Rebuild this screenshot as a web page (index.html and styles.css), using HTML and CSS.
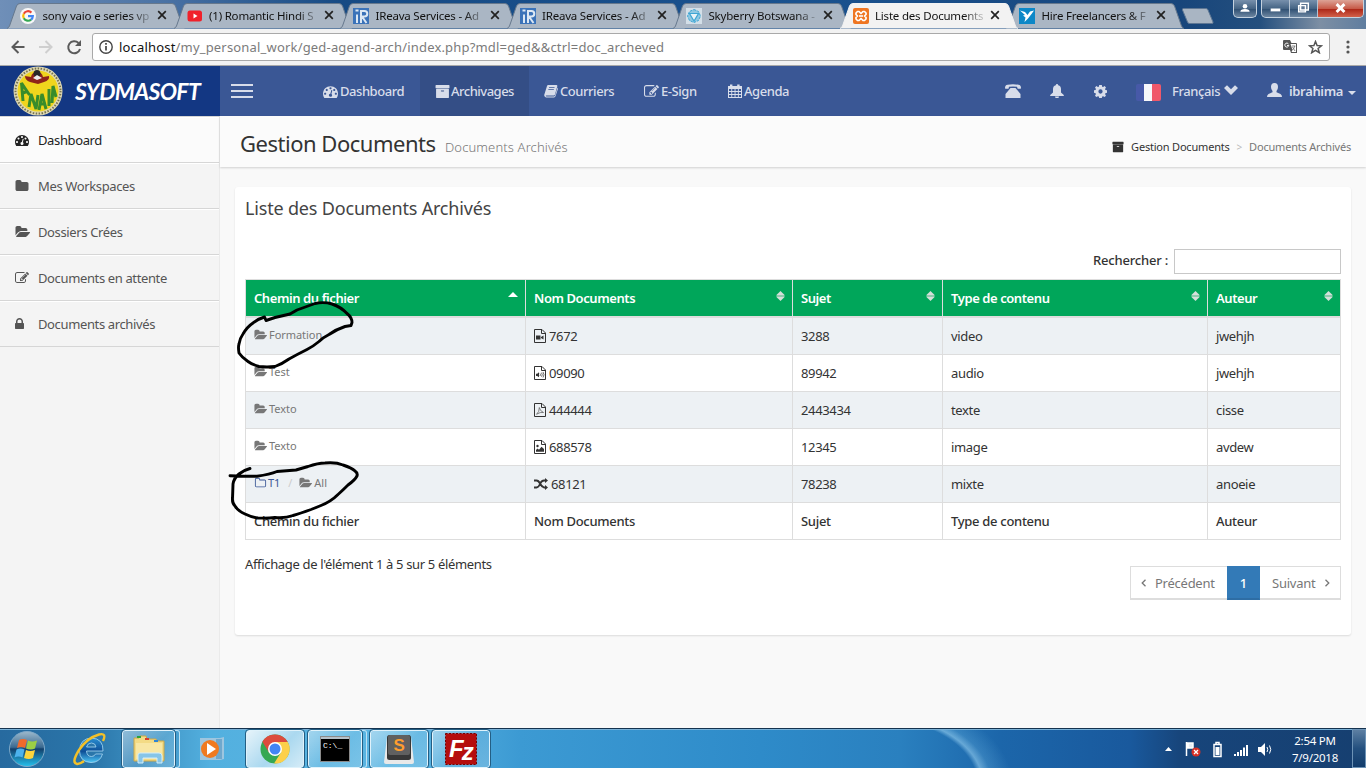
FILE: index.html
```html
<!DOCTYPE html>
<html lang="fr">
<head>
<meta charset="utf-8">
<title>Liste des Documents Archivés</title>
<link rel="stylesheet" href="styles.css">
</head>
<body>
<svg class="defs" width="0" height="0">
  <symbol id="folder" viewBox="0 0 1792 1792"><path d="M1728 608v704q0 92-66 158t-158 66h-1216q-92 0-158-66t-66-158v-960q0-92 66-158t158-66h320q92 0 158 66t66 158v32h672q92 0 158 66t66 158z"/></symbol>
  <symbol id="folder-open" viewBox="0 0 1943 1792"><path d="M1943 952q0 31-31 66l-336 396q-43 51-120.5 86.5t-143.5 35.5h-1088q-34 0-60.5-13t-26.5-43q0-31 31-66l336-396q43-51 120.5-86.5t143.5-35.5h1088q34 0 60.5 13t26.5 43zm-343-344v160h-832q-94 0-197 47.5t-164 119.5l-337 396-5 6q0-4-.5-12.5t-.5-12.5v-960q0-92 66-158t158-66h320q92 0 158 66t66 158v32h544q92 0 158 66t66 158z"/></symbol>
  <symbol id="folder-o" viewBox="0 0 1792 1792"><path d="M1600 1312v-704q0-40-28-68t-68-28h-704q-40 0-68-28t-28-68v-64q0-40-28-68t-68-28h-320q-40 0-68 28t-28 68v960q0 40 28 68t68 28h1216q40 0 68-28t28-68zm128-704v704q0 92-66 158t-158 66h-1216q-92 0-158-66t-66-158v-960q0-92 66-158t158-66h320q92 0 158 66t66 158v32h672q92 0 158 66t66 158z"/></symbol>
  <symbol id="lock" viewBox="320 0 1152 1792"><path d="M640 768h512v-192q0-106-75-181t-181-75-181 75-75 181v192zm832 96v576q0 40-28 68t-68 28h-960q-40 0-68-28t-28-68v-576q0-40 28-68t68-28h32v-192q0-184 132-316t316-132 316 132 132 316v192h32q40 0 68 28t28 68z"/></symbol>
  <symbol id="tacho" viewBox="0 0 1792 1792"><path d="M384 1152q0-53-37.5-90.5t-90.5-37.5-90.5 37.5-37.5 90.5 37.5 90.5 90.5 37.5 90.5-37.5 37.5-90.5zm192-448q0-53-37.5-90.5t-90.5-37.5-90.5 37.5-37.5 90.5 37.5 90.5 90.5 37.5 90.5-37.5 37.5-90.5zm428 481l101-382q6-26-7.5-48.5t-38.5-29.5-48 6.5-30 39.5l-101 382q-60 5-107 43.5t-63 98.5q-20 77 20 146t117 89 146-20 89-117q16-60-6-117t-72-91zm660-33q0-53-37.5-90.5t-90.5-37.5-90.5 37.5-37.5 90.5 37.5 90.5 90.5 37.5 90.5-37.5 37.5-90.5zm-640-640q0-53-37.5-90.5t-90.5-37.5-90.5 37.5-37.5 90.5 37.5 90.5 90.5 37.5 90.5-37.5 37.5-90.5zm448 192q0-53-37.5-90.5t-90.5-37.5-90.5 37.5-37.5 90.5 37.5 90.5 90.5 37.5 90.5-37.5 37.5-90.5zm320 448q0 261-141 483-19 29-54 29h-1402q-35 0-54-29-141-221-141-483 0-182 71-348t191-286 286-191 348-71 348 71 286 191 191 286 71 348z"/></symbol>
  <symbol id="edit" viewBox="0 0 1792 1792"><path d="M888 1184l116-116-152-152-116 116v56h96v96h56zm440-720q-16-16-33 1l-350 350q-17 17-1 33t33-1l350-350q17-17 1-33zm80 594v190q0 119-84.5 203.5t-203.5 84.5h-832q-119 0-203.5-84.5t-84.5-203.5v-832q0-119 84.5-203.5t203.5-84.5h832q63 0 117 25 15 7 18 23 3 17-9 29l-49 49q-14 14-32 8-23-6-45-6h-832q-66 0-113 47t-47 113v832q0 66 47 113t113 47h832q66 0 113-47t47-113v-126q0-13 9-22l64-64q15-15 35-7t20 29zm-96-738l288 288-672 672h-288v-288zm444 132l-92 92-288-288 92-92q28-28 68-28t68 28l152 152q28 28 28 68t-28 68z"/></symbol>
  <symbol id="archive" viewBox="0 0 1792 1792"><path d="M1088 832q0-26-19-45t-45-19h-256q-26 0-45 19t-19 45 19 45 45 19h256q26 0 45-19t19-45zm576-192v960q0 26-19 45t-45 19h-1408q-26 0-45-19t-19-45v-960q0-26 19-45t45-19h1408q26 0 45 19t19 45zm64-448v256q0 26-19 45t-45 19h-1536q-26 0-45-19t-19-45v-256q0-26 19-45t45-19h1536q26 0 45 19t19 45z"/></symbol>
  <symbol id="book" viewBox="0 0 14 14"><path fill-rule="evenodd" d="M4.200 1h8.300q1 .2.8 1.200L11 10.500q-.3.900-1.200.9H2.300q-.7.100-.6.600.1.400.8.400h7.600q.8 0 1-.8l2.500-8.200q.6.500.3 1.500l-2.300 7.200Q11.200 13.400 10 13.400H2Q0 13 .2 11L3 2Q3.300 1.100 4.200 1zM5.200 3.200l-.3.900h5.500l.3-.9zM4.500 5.200l-.3.900h5.500l.3-.9z"/></symbol>
  <symbol id="calendar" viewBox="0 0 14 14"><path fill-rule="evenodd" d="M0 2h2V.6h2.400V2h4.800V.6h2.400V2H14v12H0zM1 5v2h2.300V5zm3.200 0v2h2.400V5zm3.300 0v2h2.400V5zm3.300 0v2H13V5zM1 8v2h2.300V8zm3.200 0v2h2.400V8zm3.300 0v2h2.400V8zm3.300 0v2H13V8zM1 11v2h2.300v-2zm3.200 0v2h2.400v-2zm3.300 0v2h2.400v-2zm3.300 0v2H13v-2z"/></symbol>
  <symbol id="page" viewBox="0 0 12 14"><path fill="none" stroke="currentColor" d="M.5.500h7.500l3.500 3.500v9.500H.5zM7.500.5v4h4"/></symbol>
  <symbol id="tab" viewBox="0 0 178 26" preserveAspectRatio="none"><path d="M0 25.500Q1.500 25 2.500 23L9.500 3Q10.500.5 13 .5H165Q167.500.5 168.500 3L175.500 23Q176.500 25 178 25.500"/></symbol>
  <symbol id="close" viewBox="0 0 10 10"><path d="M1.200 1.200l7.600 7.600M8.800 1.200L1.200 8.800" stroke="#222" stroke-width="1.700"/></symbol>
</svg>

<div class="browser-tabs">
  <div class="tab"><svg class="tab-shape"><use href="#tab"/></svg>
    <svg class="fav" viewBox="0 0 16 16"><circle cx="8" cy="8" r="8" fill="#f8f8f8"/><g fill="none" stroke-width="2.200"><path d="M11.400 4.600A4.800 4.800 0 0 0 3.800 5.700" stroke="#ea4335"/><path d="M3.800 5.700a4.800 4.800 0 0 0 0 4.600" stroke="#fbbc05"/><path d="M3.800 10.300a4.800 4.800 0 0 0 7.300 1.300" stroke="#34a853"/><path d="M11.100 11.600A4.800 4.800 0 0 0 12.800 8.200H8" stroke="#4285f4"/></g></svg>
    <span class="tab-title">sony vaio e series vp</span><svg class="x"><use href="#close"/></svg></div>
  <div class="tab"><svg class="tab-shape"><use href="#tab"/></svg>
    <svg class="fav" viewBox="0 0 16 16"><rect x=".5" y="2.500" width="14.500" height="11" rx="2.500" fill="#f0212b"/><path d="M6.500 5.400v5l4-2.500z" fill="#fff"/></svg>
    <span class="tab-title">(1) Romantic Hindi S</span><svg class="x"><use href="#close"/></svg></div>
  <div class="tab"><svg class="tab-shape"><use href="#tab"/></svg>
    <svg class="fav" viewBox="0 0 16 16"><path fill="#3b73b9" d="M0 0h16v16H0z"/><path d="M4 6.500V15M2.500 2.500h3M8 15V3h3.500a2.500 2.500 0 0 1 0 5.500H9L13.500 15" fill="none" stroke="#dce8f4" stroke-width="2"/></svg>
    <span class="tab-title">IReava Services - Ad</span><svg class="x"><use href="#close"/></svg></div>
  <div class="tab"><svg class="tab-shape"><use href="#tab"/></svg>
    <svg class="fav" viewBox="0 0 16 16"><path fill="#3b73b9" d="M0 0h16v16H0z"/><path d="M4 6.500V15M2.500 2.500h3M8 15V3h3.500a2.500 2.500 0 0 1 0 5.500H9L13.500 15" fill="none" stroke="#dce8f4" stroke-width="2"/></svg>
    <span class="tab-title">IReava Services - Ad</span><svg class="x"><use href="#close"/></svg></div>
  <div class="tab"><svg class="tab-shape"><use href="#tab"/></svg>
    <svg class="fav" viewBox="0 0 16 16"><path fill="#d3dfe8" d="M0 0h16v16H0z"/><path d="M8 1.500l4.500 2L14.500 8l-2 4.500-4.500 2-4.500-2L1.500 8l2-4.500z" fill="#8fc8e2" stroke="#3fa6d4" stroke-dasharray="2.500 1"/><path d="M3.500 5.500h9L8 13z" fill="#e8f3f8" stroke="#3fa6d4" stroke-width="1.200"/></svg>
    <span class="tab-title">Skyberry Botswana -</span><svg class="x"><use href="#close"/></svg></div>
  <div class="tab active"><svg class="tab-shape"><use href="#tab"/></svg>
    <svg class="fav" viewBox="0 0 16 16"><rect width="16" height="16" rx="2" fill="#ef7622"/><path d="M4.500 3.500h1.500L8 5.500l2-2h1.500l1.500 1.500v1.500L11.500 8 13 9.500V11l-1.500 1.500H10l-2-2-2 2H4.500L3 11V9.500L4.500 8 3 6.500V5z" fill="none" stroke="#fff" stroke-width="1.700" stroke-linejoin="round"/><path d="M6 8h4" stroke="#fff" stroke-width="1.600"/></svg>
    <span class="tab-title">Liste des Documents</span><svg class="x"><use href="#close"/></svg></div>
  <div class="tab"><svg class="tab-shape"><use href="#tab"/></svg>
    <svg class="fav" viewBox="0 0 16 16"><path fill="#0c87c7" d="M0 0h16v16H0z"/><path d="M1 2.500l5 1.500 2.500 3L11 3.500l4-1-2.500 3.500-3.500 4.500L5.500 14 6.500 9.500 4 7.500 6 7z" fill="#fff"/></svg>
    <span class="tab-title">Hire Freelancers &amp; F</span><svg class="x"><use href="#close"/></svg></div>
  <svg class="newtab" width="34" height="18" viewBox="0 0 34 18"><path d="M2.500 1.500H25q1.500 0 2 1.500l5 12q.5 1.500-1 1.500H8.500Q7 16.500 6.500 15L1.500 3q-.5-1.500 1-1.500z" fill="#a9b5c3" stroke="#5f7794"/></svg>
  <div class="win-btns">
    <div class="wb user"><svg viewBox="0 0 24 17"><circle cx="12" cy="6" r="2.500" fill="#fff"/><path d="M7 12q0-3 5-3t5 3z" fill="#fff"/></svg></div>
    <div class="wb group">
      <div><svg viewBox="0 0 28 17"><path d="M9 8.500h10v3H9z" fill="#fff"/></svg></div>
      <div><svg viewBox="0 0 28 17"><path d="M11 3h8v7h-8zM9 5.500h7v6.500H9z" fill="#5f7794" stroke="#fff" stroke-width="1.500"/></svg></div>
      <div class="red"><svg viewBox="0 0 46 17"><path d="M19 4l8 8M27 4l-8 8" stroke="#fff" stroke-width="3"/></svg></div>
    </div>
  </div>
</div>

<div class="toolbar">
  <svg class="tool-nav" width="80" height="16" viewBox="0 0 80 16"><g fill="none" stroke-width="2"><path d="M14.500 8H2.500M8.500 2l-6 6 6 6" stroke="#5a5a5a"/><path d="M29 8h12.500M35.500 2l6 6-6 6" stroke="#cfcfcf"/><path d="M68.500 4A6 6 0 1 0 70 10" stroke="#5a5a5a"/></g><path d="M71 1v6h-6z" fill="#5a5a5a"/></svg>
  <div class="omnibox">
    <svg width="14" height="14" viewBox="0 0 14 14"><circle cx="7" cy="7" r="6.200" fill="none" stroke="#444" stroke-width="1.400"/><path d="M7 6v4.500M7 3v1.700" stroke="#444" stroke-width="1.700"/></svg>
    <span class="url"><b>localhost</b>/my_personal_work/ged-agend-arch/index.php?mdl=ged&amp;&amp;ctrl=doc_archeved</span>
    <svg class="translate" width="14" height="14" viewBox="0 0 14 14"><path d="M1 0h6l1.500 3H13q1 0 1 1v9H8l-1-3H1q-1 0-1-1V1q0-1 1-1z" fill="#555"/><path d="M7.500 4H13v8H8.500l1-2z" fill="#fff"/><path d="M5.500 4A2 2 0 1 0 5.800 5.500H4" fill="none" stroke="#fff"/><path d="M8.800 6h3.500M11.800 6q-.8 3-2.500 4M9.500 7l2.500 4" fill="none" stroke="#666" stroke-width=".8"/></svg>
    <svg width="15" height="14" viewBox="0 0 15 14"><path d="M7.500 1.500l1.600 4 4.400.3-3.400 2.700 1.200 4.200-3.800-2.400-3.800 2.400 1.200-4.200L1.500 5.800l4.400-.3z" fill="none" stroke="#555" stroke-width="1.500"/></svg>
  </div>
  <svg class="dots" width="4" height="14" viewBox="0 0 4 14"><g fill="#555"><circle cx="2" cy="2" r="1.600"/><circle cx="2" cy="7" r="1.600"/><circle cx="2" cy="12" r="1.600"/></g></svg>
</div>

<header class="navbar">
  <div class="brand">
    <svg width="50" height="50" viewBox="0 0 50 50"><circle cx="25" cy="25" r="24.500" fill="#ded8b2"/><circle cx="25" cy="25" r="22.500" fill="none" stroke="#77734f" stroke-width="2" stroke-dasharray="1.500 1.500"/><circle cx="25" cy="25" r="20.500" fill="#f0d51d"/><path d="M12 10l6 1q1-5 6-5t6 5l6-1q1 4-5 6l-6 2-8-2q-5-2-5-6z" fill="#8e241a"/><circle cx="24" cy="7.500" r="3.500" fill="#292929"/><path d="M20 12l4-3 5 3-5 2z" fill="#eee"/><g fill="none" stroke="#388c2b" stroke-width="3"><path d="M10 35L8.500 17l8 12M10 27l5-2"/><path d="M16 41l2-13 5 15 2-14"/><path d="M26 44l3-16 4 15M28 38h5"/><path d="M36 40V23M39 37l1-17 3 11"/></g></svg>
    <span>SYDMASOFT</span>
  </div>
  <div class="burger"><i></i><i></i><i></i></div>
  <nav class="topnav">
    <a class="n1"><svg><use href="#tacho"/></svg>Dashboard</a>
    <a class="n2"><svg><use href="#archive"/></svg>Archivages</a>
    <a class="n3"><svg><use href="#book"/></svg>Courriers</a>
    <a class="n4"><svg><use href="#edit"/></svg>E-Sign</a>
    <a class="n5"><svg><use href="#calendar"/></svg>Agenda</a>
  </nav>
  <div class="userbar">
    <svg width="16" height="14" viewBox="0 0 16 14"><path d="M0 4Q0 1 2.500 .8 8-.5 13.500.8 16 1 16 4l-.3.800h-3L12 2.800Q8 2 4 2.800L3.500 4.800H.3zM5.500 4h5l5 6v4H.5v-4z"/></svg>
    <svg width="14" height="14" viewBox="0 0 14 14"><path d="M7 0q1.200 0 1.200 1.200Q11 2 11 5v3.500L13.800 11v1H.2v-1L3 8.500V5q0-3 2.800-3.800Q5.800 0 7 0zM5 12.500h4L8.500 14h-3z"/></svg>
    <svg width="13" height="13" viewBox="0 0 14 14"><path fill-rule="evenodd" d="M5.600 0h2.800l.4 1.800 1 .4L11.400 1.200l1.500 1.500-1 1.700.4 1 1.700.3v2.700l-1.700.4-.4 1 1 1.700-1.500 1.500-1.600-1-1 .4-.4 1.800H5.600l-.4-1.800-1-.4-1.600 1L1.100 11.500l1-1.700-.4-1L0 8.400V5.700l1.700-.3.4-1-1-1.700 1.500-1.500 1.600 1 1-.4zM7 4.700a2.300 2.300 0 1 0 0 4.600 2.300 2.300 0 0 0 0-4.600z"/></svg>
    <span class="flag"></span>
    <span class="lang">Français</span>
    <svg class="chev" width="14" height="10" viewBox="0 0 14 10"><path d="M0 3L3 .2l4 4 4-4L14 3 7 10z"/></svg>
    <svg class="man" width="15" height="14" viewBox="0 0 15 14"><path d="M7.500 0Q11 0 11 4q0 2.500-1.500 4v1.200L13.500 11q1.500.8 1.500 3H0q0-2.200 1.500-3l4-1.800V8Q4 6.500 4 4q0-4 3.500-4z"/></svg>
    <span class="uname">ibrahima</span><i class="caret"></i>
  </div>
</header>

<div class="page">
  <aside class="sidebar">
    <a class="on"><svg><use href="#tacho"/></svg>Dashboard</a>
    <a><svg><use href="#folder"/></svg>Mes Workspaces</a>
    <a><svg class="w"><use href="#folder-open"/></svg>Dossiers Crées</a>
    <a><svg><use href="#edit"/></svg>Documents en attente</a>
    <a><svg class="l"><use href="#lock"/></svg>Documents archivés</a>
  </aside>
  <main class="content">
    <div class="page-head">
      <h1>Gestion Documents</h1><small>Documents Archivés</small>
      <div class="crumbs"><svg><use href="#archive"/></svg><span class="c1">Gestion Documents</span><i>&gt;</i><span class="c2">Documents Archivés</span></div>
    </div>
    <section class="panel">
      <h2>Liste des Documents Archivés</h2>
      <div class="search"><label>Rechercher :</label><input type="text"></div>
      <table>
        <colgroup><col class="k1"><col class="k2"><col class="k3"><col class="k4"><col class="k5"></colgroup>
        <thead><tr><th>Chemin du fichier<i class="up"></i></th><th>Nom Documents<i class="sort"></i></th><th>Sujet<i class="sort"></i></th><th>Type de contenu<i class="sort"></i></th><th>Auteur<i class="sort"></i></th></tr></thead>
        <tbody>
          <tr><td class="path"><svg><use href="#folder-open"/></svg>Formation</td><td><svg class="doc" viewBox="0 0 12 14"><use href="#page"/><path d="M2 6.500h4.500v4H2zM7 8l2.500-1.500v4L7 9z"/></svg>7672</td><td>3288</td><td>video</td><td>jwehjh</td></tr>
          <tr><td class="path"><svg><use href="#folder-open"/></svg>Test</td><td><svg class="doc" viewBox="0 0 12 14"><use href="#page"/><path d="M2 7.700h1.200L5 6.300v5L3.200 10H2z"/><path d="M6 7.500q1 1.200 0 2.500M7.500 6.700q1.500 2 0 4M9 6q2 2.700 0 5.500" fill="none" stroke="#333" stroke-width=".7"/></svg>09090</td><td>89942</td><td>audio</td><td>jwehjh</td></tr>
          <tr><td class="path"><svg><use href="#folder-open"/></svg>Texto</td><td><svg class="doc" viewBox="0 0 12 14"><use href="#page"/><path d="M5.300 4.500Q6 8 9.500 9.500q-3-.8-7 1.800Q5.500 9 5.300 4.500z" fill="none" stroke="#555" stroke-width=".7"/></svg>444444</td><td>2443434</td><td>texte</td><td>cisse</td></tr>
          <tr><td class="path"><svg><use href="#folder-open"/></svg>Texto</td><td><svg class="doc" viewBox="0 0 12 14"><use href="#page"/><circle cx="3.500" cy="6" r="1.200"/><path d="M2 11.700V10l1.500-1.500L5 9.800l2.500-3L10 9v2.700z"/></svg>688578</td><td>12345</td><td>image</td><td>avdew</td></tr>
          <tr><td class="path"><svg class="fo"><use href="#folder-o"/></svg><span class="link">T1</span><span class="sep">/</span><svg><use href="#folder-open"/></svg>All</td><td><svg class="rnd" viewBox="0 0 14 12"><path d="M0 2.500h2.500Q4.500 2.500 6 5.500T10 9.500h1.500M0 9.500h2.500Q4.500 9.500 6 6T10 2.500h1.500" fill="none" stroke="#333" stroke-width="1.800"/><path d="M11 0l3 2.500-3 2.500zM11 7l3 2.500L11 12z"/></svg>68121</td><td>78238</td><td>mixte</td><td>anoeie</td></tr>
        </tbody>
        <tfoot><tr><td>Chemin du fichier</td><td>Nom Documents</td><td>Sujet</td><td>Type de contenu</td><td>Auteur</td></tr></tfoot>
      </table>
      <div class="foot">
        <span class="info">Affichage de l'élément 1 à 5 sur 5 éléments</span>
        <div class="pager"><a class="prev"><svg viewBox="0 0 5 8"><path d="M4.500.7L1.200 4l3.300 3.300"/></svg>Précédent</a><a class="cur">1</a><a class="next">Suivant<svg viewBox="0 0 5 8"><path d="M.5.7L3.800 4 .5 7.300"/></svg></a></div>
      </div>
    </section>
  </main>
</div>

<svg class="scribble" width="150" height="230" viewBox="220 295 150 230"><path d="M264.500 317l1.500 3.500 9-3 15-3.500 7-4 18-6.500q9-2 17 .5 9 3 15 9.500 5 4 5 9l-1 3-6 1q-9 3-16 8-6 3-10 7-6 5-12 8-10 5-18 9.500-7 5-14 7.500-8 1-16 0-7-2-11-5-6-4-9-8.500-1-6 0-9 1-6 4-10 4-7 10-11 5-4 11.500-6"/><path d="M230 475.700l14 .6h13q13-2 20-4.800l19-1.500 12-3.500q10-3.500 17-3.500 11-1 18 2 9 3 12 6 3 2 2 5-2 4-9 9-6 6-10 9.500-7 7-17 11l-10 4q-11 4-18 6-8 3-18 2-8 1-17 .5-7-1-13-4-7-3-10-8-3-3-2.500-8l.5-14q1-6 6-10 5-4 11-5.500"/></svg>

<footer class="taskbar">
  <svg class="start" width="38" height="38" viewBox="0 0 38 38"><circle cx="19" cy="19" r="17.500" fill="url(#orb)" stroke="#7fa9c8"/><defs><linearGradient id="orb" x2="0" y2="1"><stop offset="0" stop-color="#9db9cc"/><stop offset=".45" stop-color="#3b6a91"/><stop offset=".5" stop-color="#123f6b"/><stop offset="1" stop-color="#25c2ee"/></linearGradient></defs><path d="M11 10q4-2 8 0l-2 8q-4-2-8 0z" fill="#ef6a2c"/><path d="M20 10.500q4 2 9 0l-2 8q-4 2-9 0z" fill="#9bcf45"/><path d="M8.500 19.500q4-2 8 0l-2 8q-4-2-8 0z" fill="#4cb2ec"/><path d="M18 20q4 2 9 0l-2 8q-4 2-9 0z" fill="#fbd53c"/></svg>
  <svg class="ie" width="36" height="36" viewBox="0 0 36 36"><defs><linearGradient id="ieg" x2="0" y2="1"><stop offset="0" stop-color="#2a8fd2"/><stop offset=".55" stop-color="#0e4f97"/><stop offset="1" stop-color="#4cc6f5"/></linearGradient></defs><path d="M31 20H14.500q.5 5.500 5 5.500 3 0 4-2.500h7q-2.500 8.500-11.500 8.500Q7.500 31 7.500 19.500 8 7.500 19.500 7 31.500 7.500 31 20zM24 16q-.5-4-4.500-4t-5 4z" fill="url(#ieg)" stroke="#a9dbf4" stroke-width=".8"/><path d="M31 10Q35 1.500 27 3.500 15 7 7 19-1 32 5 33q3 .3 7-3" fill="none" stroke="#f2c029" stroke-width="2.400"/></svg>
  <div class="tb explorer"><svg width="34" height="32" viewBox="0 0 34 32"><path d="M2 5h5l1-2h6l1 3h9l1 2h7v20H2z" fill="#f3db85" stroke="#c9a648"/><path d="M5 3h4v2H5z" fill="#2da13b"/><path d="M13 5h4v2h-4z" fill="#d5402c"/><path d="M22 7h4v2h-4z" fill="#2f86d5"/><path d="M4 10h26v16H4z" fill="#f8e7a4"/><path d="M6 30V22q0-2 2-2h19q3 0 3 3v7h-5v-5H11v5z" fill="#86c5e8" stroke="#d3eefa"/></svg></div>
  <div class="tb-edge"></div>
  <svg class="wmp" width="30" height="30" viewBox="0 0 30 30"><path d="M3 4h20l4-1v22l-4 1H3z" fill="#9ec6df"/><path d="M19 5h6v20h-6z" fill="#6fa8cd"/><circle cx="13" cy="15" r="9" fill="#f07a20"/><path d="M10 9l9 6-9 6z" fill="#fff"/></svg>
  <div class="tb chrome"><svg width="30" height="30" viewBox="0 0 30 30"><circle cx="15" cy="15" r="14.500" fill="#35a853"/><path d="M2.400 7.800A14.500 14.500 0 0 1 27.600 8H15l-6 10.500z" fill="#dd4b3e"/><path d="M27.800 8A14.500 14.500 0 0 1 14 29.500L21.300 18 15 8z" fill="#fcd04b"/><circle cx="15" cy="15" r="7" fill="#fff"/><circle cx="15" cy="15" r="5.500" fill="#4285f4"/></svg></div>
  <div class="tb cmd"><svg width="30" height="26" viewBox="0 0 30 26"><path d="M.5.500h29v25H.5z" fill="#000" stroke="#8b8b8b"/><path d="M1 1h28v2H1z" fill="#b6c1ca"/><text x="3" y="12" class="cmd-t">C:\_</text></svg></div>
  <div class="tb-edge e2"></div>
  <div class="tb sub"><svg width="30" height="30" viewBox="0 0 30 30"><path d="M3 3h24l3 25q0 2-2 2H2q-2 0-2-2z" fill="#e9e9e9"/><rect x="3" y="1" width="24" height="25" rx="2.500" fill="#373737"/><rect x="4" y="1" width="22" height="20" rx="2" fill="#606060"/><text x="9.500" y="17" class="sub-s">S</text></svg></div>
  <div class="tb fz"><svg width="32" height="32" viewBox="0 0 32 32"><path d="M.5.500h31v31H.5z" fill="#b50d0d" stroke="#700" stroke-dasharray="2 1.500"/><text x="4" y="24" class="fz-t">F<tspan dx="-2" dy="3">z</tspan></text></svg></div>
  <div class="tray">
    <svg width="110" height="18" viewBox="0 0 110 18"><path d="M1 11l3.500-4L8 11z" fill="#fff"/><path d="M22.500 2v14M24 3h5v5h-5z" stroke="#fff" stroke-width="1.500" fill="#e8eef4"/><circle cx="32" cy="12" r="4.500" fill="#d93025"/><path d="M30 10l4 4M34 10l-4 4" stroke="#fff" stroke-width="1.300"/><path d="M50 4.500h7v12h-7zM52 2.500h3v2h-3z" stroke="#fff" stroke-width="1.500" fill="none"/><path d="M51.500 7h4v8h-4z" fill="#fff"/><path d="M70 14h2v2h-2zM73 12h2v4h-2zM76 10h2v6h-2zM79 7.500h2V16h-2zM82 5h2v11h-2z" fill="#fff"/><path d="M94 7h3l4-4v13l-4-4h-3z" fill="#fff"/><path d="M103 7q1.500 2.500 0 5M105.500 5.500q2.500 4 0 8" stroke="#fff" fill="none"/></svg>
    <div class="clock"><span>2:54 PM</span><span>7/9/2018</span></div>
    <div class="peek"></div>
  </div>
</footer>
</body>
</html>
```
FILE: styles.css
```css
* { box-sizing: border-box; }
body { margin: 0; width: 1366px; height: 768px; overflow: hidden; position: relative; display: flex; flex-direction: column; font-family: "Noto Sans", "Open Sans", sans-serif; font-size: 13px; color: #333; background: #f9f9f9; }
.defs { position: absolute; }
svg { flex: none; fill: currentColor; }
i { font-style: normal; }

/* browser frame */
.browser-tabs { height: 29px; flex: none; display: flex; padding: 3px 0 0 7px; background: linear-gradient(90deg, #6f8fb8 0, #4b73a5 160px, #164a84 340px, #1a528f 800px, #17457b 1180px, #244f7e 1260px, #7d8fa4 1320px, #5f7d9f 1366px); }
.tab { position: relative; width: 178px; height: 26px; margin-right: -11.500px; flex: none; display: flex; align-items: center; padding: 0 18px 0 13px; }
.tab-shape { position: absolute; inset: 0; width: 178px; height: 26px; fill: #aab6c4; stroke: #66788d; }
.tab.active { z-index: 2; }
.tab.active .tab-shape { fill: #f2f2f2; stroke: #f2f2f2; }
.fav { width: 16px; height: 16px; position: relative; margin-top: -1px; }
.tab-title { position: relative; width: 109px; margin: -2px 0 0 6.500px; overflow: hidden; white-space: nowrap; font-size: 11.500px; letter-spacing: -.2px; color: #111; -webkit-mask-image: linear-gradient(90deg, #000 82%, rgba(0,0,0,.2)); mask-image: linear-gradient(90deg, #000 82%, rgba(0,0,0,.2)); }
.x { position: relative; width: 10px; height: 10px; margin: -2px 0 0 7px; }
.newtab { margin: 4px 0 0 8px; position: relative; }
.win-btns { display: flex; gap: 4px; margin: -3px 2px 0 auto; height: 18px; }
.wb { border: 1px solid #c5d2df; border-top: 0; border-radius: 0 0 5px 5px; background: linear-gradient(#7790ac, #456484 50%, #2d4d70 51%, #6c86a1); height: 18px; overflow: hidden; }
.wb svg { height: 17px; width: 100%; display: block; }
.wb.user { width: 24px; }
.wb.group { width: 103px; display: flex; }
.wb.group div { flex: 0 0 28px; border-right: 1px solid #b4c3d2; }
.wb.group .red { flex: 1; border: 0; background: linear-gradient(#dda396, #c75b49 50%, #aa2415 51%, #d2614a); }
.toolbar { height: 37px; flex: none; display: flex; align-items: center; padding: 0 16px 0 10px; background: #f2f2f2; border-bottom: 1px solid #a9a9a9; }
.omnibox { width: 1238px; height: 28px; margin-left: 2px; padding: 0 6px; display: flex; align-items: center; border: 1px solid #a9a9a9; border-radius: 3px; background: #fff; }
.url { margin: -1px auto 0 6px; font-size: 13px; letter-spacing: .18px; color: #7b7b7b; }
.url b { font-weight: 400; color: #111; }
.translate { margin-right: 11px; }
.dots { margin-left: auto; }

/* application bar */
.navbar { height: 50px; flex: none; display: flex; background: #3a5795; color: #d8ddea; }
.brand { width: 220px; display: flex; align-items: center; padding-left: 13px; background: #133783; color: #fff; }
.brand span { margin-left: 12px; font: italic 700 23px Lato, sans-serif; letter-spacing: -.650px; }
.burger { width: 88px; padding: 18px 0 0 11px; display: flex; flex-direction: column; gap: 4px; }
.burger i { width: 22px; height: 2px; background: #d8ddea; }
.topnav { display: flex; }
.topnav a { display: flex; align-items: center; padding-left: 15px; font-weight: 500; letter-spacing: -.45px; white-space: nowrap; }
.topnav svg { width: 15px; height: 15px; margin-right: 2px; }
.topnav .n1 { width: 112px; } .topnav .n2 { width: 109px; background: #344e86; letter-spacing: -.5px; }
.topnav .n3 { width: 100px; } .topnav .n4 { width: 84px; } .topnav .n5 { width: 90px; }
.topnav .n2 svg { margin-right: 1px; }
.topnav .n5 svg, .topnav .n3 svg { width: 14px; height: 14px; }
.userbar { margin-left: auto; width: 361px; display: flex; align-items: center; }
.userbar svg:nth-child(2) { margin-left: 29px; }
.userbar svg:nth-child(3) { margin-left: 30px; }
.flag { width: 25px; height: 17px; border-radius: 2px; margin: 2px 0 0 29px; background: linear-gradient(90deg, #4759a8 33%, #f7f7fa 33% 64%, #f0586a 64%); }
.lang { margin-left: 11px; width: 52px; font-weight: 500; letter-spacing: -.4px; }
.chev { margin-top: -2px; }
.man { margin: -2px 0 0 29px; }
.uname { margin-left: 7px; width: 59px; font-weight: 600; letter-spacing: -.35px; }
.caret { border: 4px solid transparent; border-top-color: #d8ddea; border-bottom: 0; margin: 4px 0 0 0; }

/* body */
.page { height: 612px; flex: none; display: flex; }
.sidebar { width: 220px; background: #f4f4f4; border-right: 1px solid #eaeaea; border-top: 1px solid #d6d6d6; color: #555; }
.sidebar a { height: 46px; display: flex; align-items: center; padding-left: 15px; border-bottom: 1px solid #d6d6d6; border-top: 1px solid #fff; letter-spacing: -.37px; }
.sidebar a.on { background: #fbfbfb; color: #222; }
.sidebar svg { width: 14px; height: 14px; margin-right: 9px; }
.sidebar svg.w { width: 15px; margin-right: 8px; }
.sidebar svg.l { width: 9px; margin-right: 14px; }
.content { flex: 1; }
.page-head { height: 51px; background: #fbfbfb; display: flex; align-items: center; padding: 6px 15px 0 20px; box-shadow: 0 1px 2px rgba(0,0,0,.16); }
h1 { margin: -3px 0 0; font-size: 22px; font-weight: 400; letter-spacing: -.48px; width: 196px; white-space: nowrap; }
small { margin: 5px 0 0 9px; font-size: 13px; letter-spacing: .13px; color: #777; font-weight: 300; }
.crumbs { margin: 4px 0 0 auto; display: flex; align-items: center; font-size: 11px; letter-spacing: -.2px; white-space: nowrap; }
.crumbs svg { width: 12px; height: 12px; margin: 0 7px 0 0; color: #333; }
.crumbs i { margin: 0 7px; color: #bbb; font-size: 10px; }
.c2 { color: #777; }
.panel { margin: 20px 15px 0; height: 448px; padding: 10px 10px 0; background: #fff; border-radius: 3px; box-shadow: 0 1px 2px rgba(0,0,0,.12); }
h2 { margin: 0; height: 52px; font-size: 18px; line-height: 23px; font-weight: 400; letter-spacing: -.18px; color: #444; }
.search { display: flex; justify-content: flex-end; align-items: center; height: 25px; letter-spacing: -.2px; font-weight: 500; }
.search label { margin-top: -3px; }
.search input { width: 167px; height: 25px; margin-left: 6px; border: 1px solid #c8c8c8; padding: 0; }
table { width: 1096px; margin-top: 5px; table-layout: fixed; border-collapse: separate; border-spacing: 0; border-left: 1px solid #ddd; border-top: 1px solid #ddd; }
.k1 { width: 280px; } .k2 { width: 267px; } .k3 { width: 150px; } .k4 { width: 265px; } .k5 { width: 133px; }
th, td { height: 37px; padding: 0 8px; text-align: left; line-height: 18px; border-right: 1px solid #ddd; border-bottom: 1px solid #ddd; font-weight: 400; letter-spacing: -.35px; white-space: nowrap; }
th { position: relative; height: 38px; border-bottom-width: 2px; background: #00a65a; color: #fff; font-weight: 600; letter-spacing: -.42px; }
tbody tr:nth-child(odd) { background: #edf1f4; }
tfoot td { font-weight: 500; letter-spacing: -.3px; }
.up { position: absolute; right: 7px; top: 12px; border: 5px solid transparent; border-bottom-color: #fff; border-top: 0; }
.sort { position: absolute; right: 7px; top: 11px; width: 9px; height: 10px; background: linear-gradient(#d5dfda 4px, #8fcbad 4px 6px, #d5dfda 6px); clip-path: polygon(50% 0, 95% 40%, 95% 60%, 50% 100%, 5% 60%, 5% 40%); }
.path { font-size: 11px; color: #777; padding-bottom: 2px; letter-spacing: -.05px; }
.path svg { width: 13px; height: 12px; margin-right: 2px; vertical-align: -2px; }
.path .fo { color: #3a5795; margin-right: 1px; }
.link { color: #3a5795; }
.sep { color: #ccc; margin: 0 7px 0 8px; }
.doc { width: 12px; height: 14px; margin-right: 3px; vertical-align: -2px; }
.rnd { width: 14px; height: 12px; margin-right: 3px; vertical-align: -1px; }
.foot { display: flex; justify-content: space-between; }
.info { margin-top: 15px; line-height: 18px; letter-spacing: -.34px; }
.pager { display: flex; margin-top: 26px; height: 34px; color: #777; }
.pager a { display: flex; align-items: center; border: 1px solid #ddd; border-bottom-width: 2px; }
.pager svg { width: 5px; height: 8px; fill: none; stroke: #777; stroke-width: 1.300; }
.prev { width: 97px; padding-left: 10px; gap: 9px; letter-spacing: -.25px; border-right: 0 !important; }
.pager .cur { width: 33px; justify-content: center; background: #337ab7; border-color: #337ab7; border-bottom-color: #2e6da4; color: #fff; font-weight: 500; }
.next { width: 81px; padding-left: 12px; gap: 10px; letter-spacing: -.25px; border-left: 0 !important; }
.scribble { position: absolute; left: 220px; top: 295px; fill: none; stroke: #000; stroke-width: 2.900; stroke-linejoin: round; stroke-linecap: round; }

/* desktop taskbar */
.taskbar { height: 40px; flex: none; display: flex; align-items: center; border-top: 1px solid #15334f; box-shadow: inset 0 1px #7ab2d8; color: #fff; background: radial-gradient(ellipse 110px 70px at 0 55px, transparent 93%, rgba(160,215,245,.55) 98%, rgba(120,190,230,.25) 106%, transparent 125%) 875px 0 / 200px 40px no-repeat, linear-gradient(90deg, #276a9f 0, #2a75a9 90px, #53b0df 210px, #5ab5e2 400px, #3c9ad3 520px, #2e8bc9 760px, #2a80bf 900px, #1c66aa 1000px, #19599d 1130px, #17457b 1180px, #163f70 1366px); }
.start { margin-left: 8px; }
.ie { margin-left: 26px; }
.tb { height: 38px; flex: none; border: 1px solid #dff2fb; outline: 1px solid #235e84; border-radius: 3px; display: flex; align-items: center; justify-content: center; background: linear-gradient(135deg, rgba(255,255,255,.45), rgba(255,255,255,.12) 55%, rgba(255,255,255,.2)); }
.explorer { width: 53px; margin-left: 14px; }
.tb-edge { width: 5px; height: 38px; border: 1px solid #bfe2f4; border-left: 0; border-radius: 0 3px 3px 0; }
.wmp { margin-left: 17px; }
.chrome { width: 58px; margin-left: 19px; background: linear-gradient(135deg, rgba(255,255,255,.85), rgba(255,255,255,.5) 55%, rgba(255,255,255,.75)); }
.cmd { width: 54px; margin-left: 4px; }
.cmd-t { font: 8px "Liberation Mono", monospace; fill: #fff; }
.sub { width: 58px; margin-left: 3px; }
.sub-s { font: 700 17px "Liberation Sans", sans-serif; fill: #ff9d2e; }
.fz { width: 58px; margin-left: 4px; }
.fz-t { font: italic 700 24px "Liberation Sans", sans-serif; fill: #fff; }
.tray { margin-left: auto; height: 39px; display: flex; align-items: center; }
.clock { width: 74px; display: flex; flex-direction: column; align-items: center; font-size: 11.500px; line-height: 17px; letter-spacing: -.25px; }
.peek { margin-left: 0; width: 14px; height: 39px; border: 1px solid #6d93b6; background: linear-gradient(#5d7fa2, #24507f 50%, #123c6c); }
.tray > svg { margin-right: 4px; }
```
